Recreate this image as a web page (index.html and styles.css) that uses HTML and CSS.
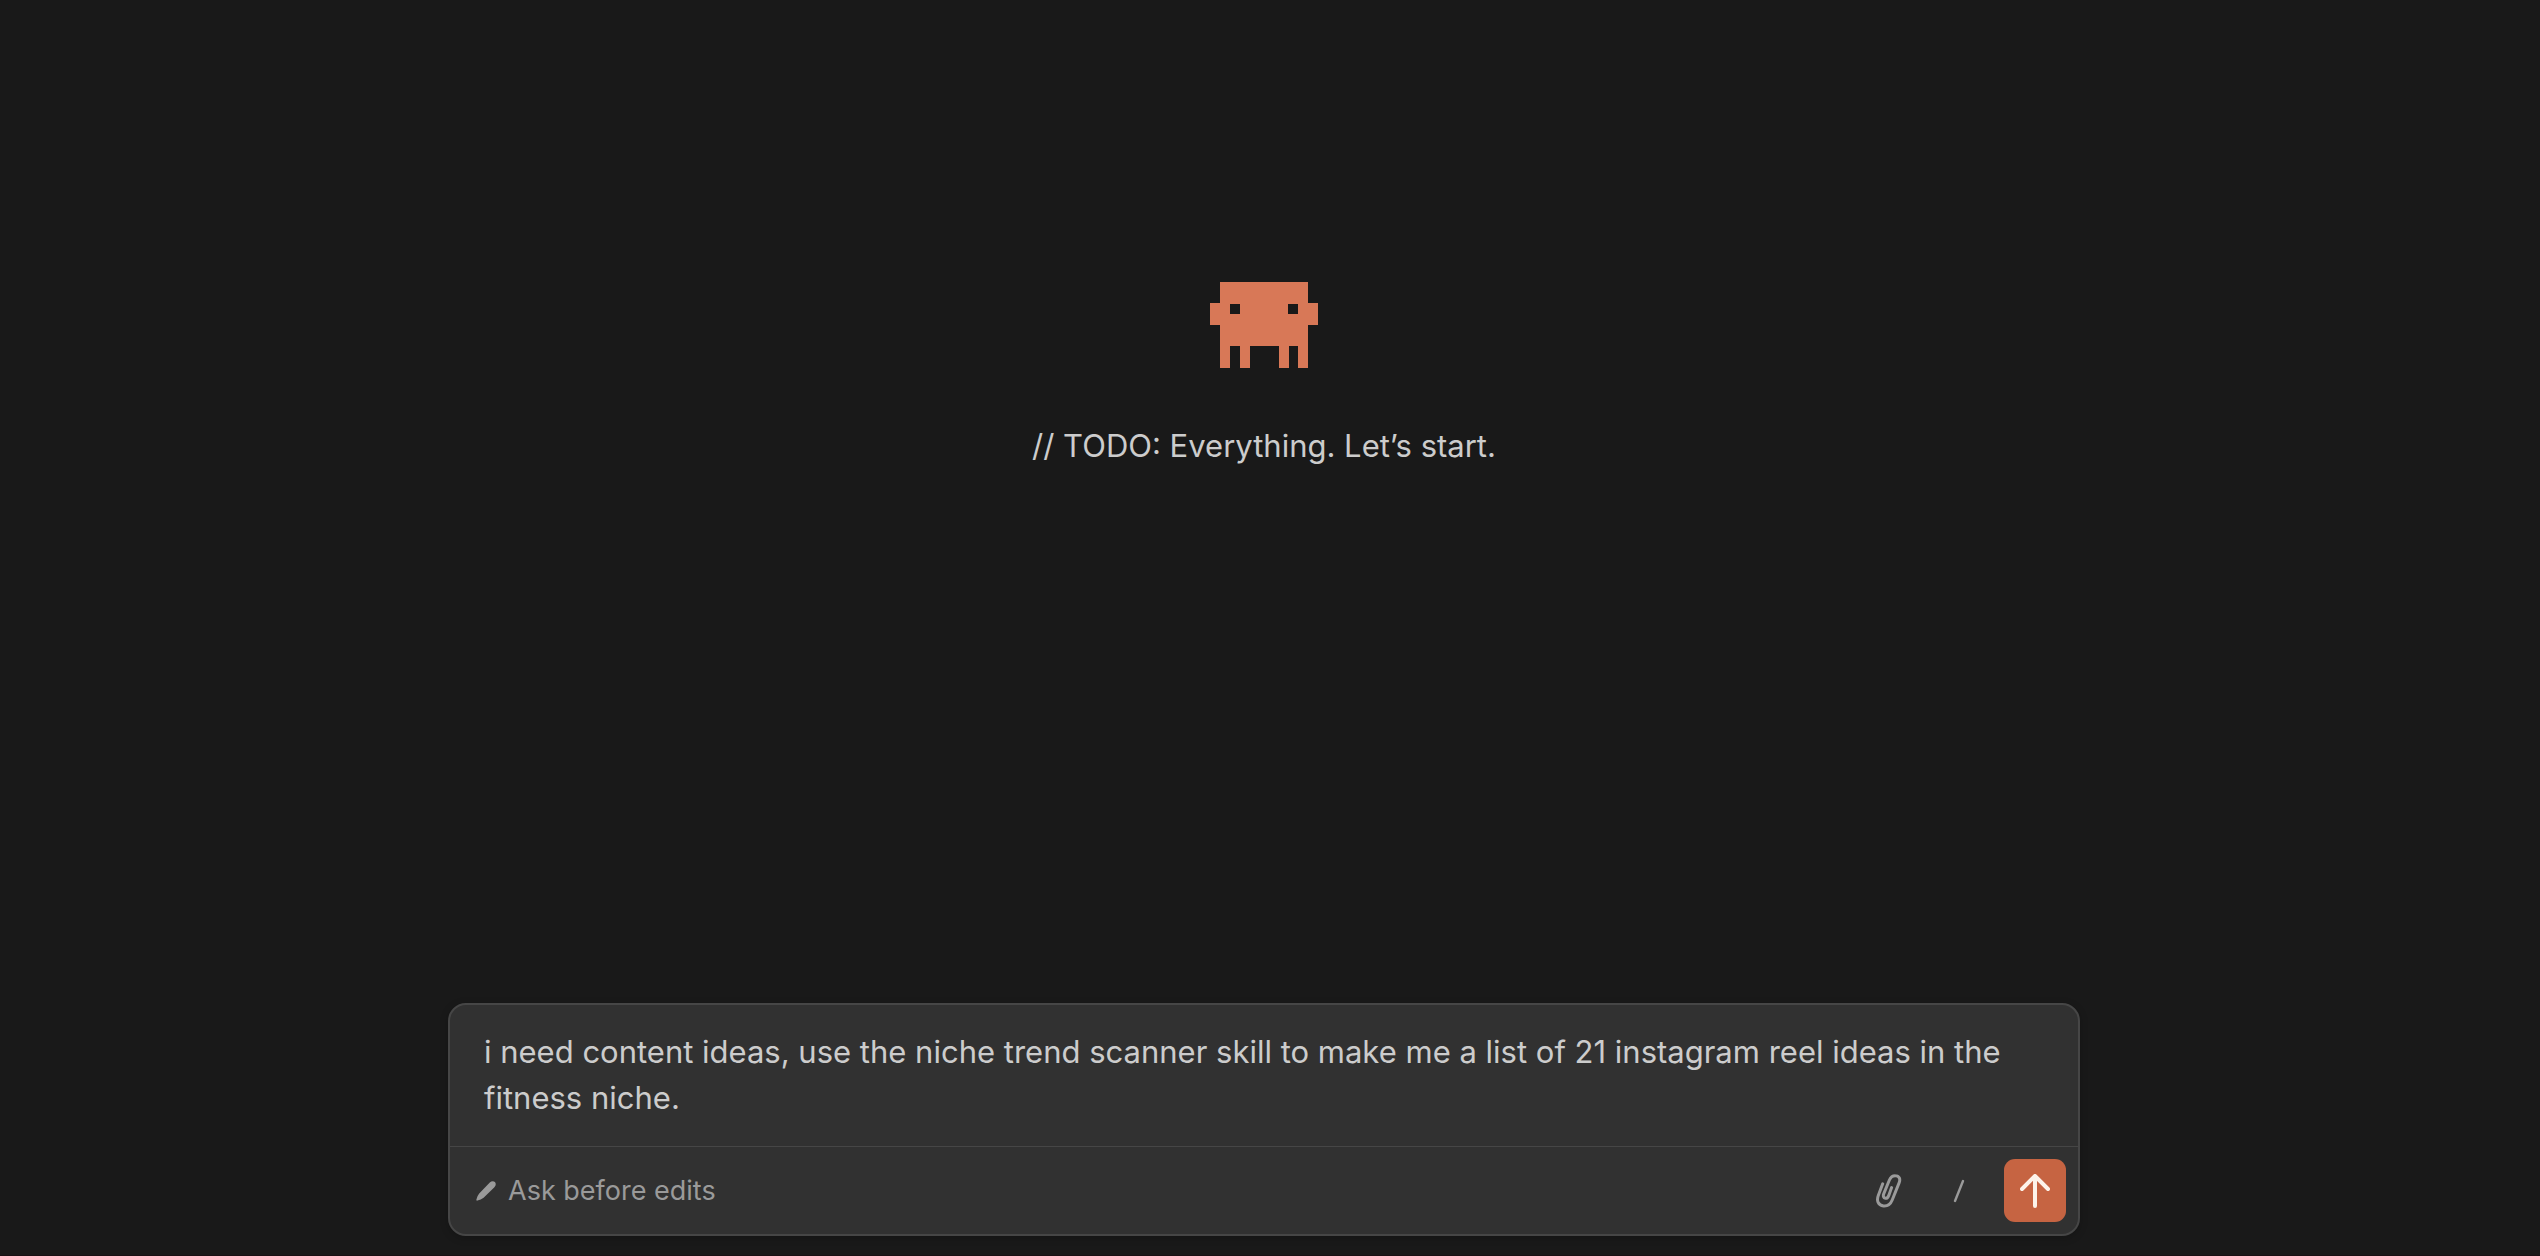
FILE: index.html
```html
<!DOCTYPE html>
<html lang="en">
<head>
<meta charset="utf-8">
<meta name="viewport" content="width=device-width, initial-scale=1">
<title>New session</title>
<link rel="stylesheet" href="styles.css">
</head>
<body>
<main class="chat">
  <section class="welcome">
    <svg class="mascot" viewBox="0 0 108 86" aria-hidden="true">
      <path fill="currentColor" fill-rule="evenodd" d="M10 0H98V21H108V43H98V86H88V64H79V86H69V64H40V86H30V64H20V86H10V43H0V21H10ZM20 22V32H30V22ZM78 22V32H88V22Z"/>
    </svg>
    <p class="tagline">// TODO: Everything. Let’s start.</p>
  </section>
  <form class="composer">
    <textarea class="prompt" rows="2" aria-label="Message">i need content ideas, use the niche trend scanner skill to make me a list of 21 instagram reel ideas in the fitness niche.</textarea>
    <div class="toolbar">
      <button class="mode" type="button">
        <svg class="pencil" viewBox="0 0 20 20" aria-hidden="true"><path fill="currentColor" d="M0.4 18.6Q1 15 3.2 12.4L13.8 1.6C15.4 0 17.6 -0.2 18.9 1.1C20.2 2.4 20 4.6 18.4 6.2L7.6 16.8Q5 19 1.4 19.6Q0.2 19.8 0.4 18.6Z"/></svg>
        <span>Ask before edits</span>
      </button>
      <div class="actions">
        <button class="tool" type="button" aria-label="Attach file">
          <svg class="clip" viewBox="0 0 26 34" aria-hidden="true"><path fill="none" stroke="currentColor" stroke-width="3" stroke-linecap="round" stroke-linejoin="round" d="M6.7 9.8L2.3 21.5C0.4 26.5 2 31.3 7.5 32C12 32.4 14.6 30 16.2 26L23.2 8.6C24.6 5 23.2 1.7 19.4 1.7C16.2 1.6 14.6 3.2 13.4 6L7.8 19.6C6.9 22 7.4 24 9.4 24.3C11.2 24.6 12 23.4 12.8 21.4L15.6 13.6"/></svg>
        </button>
        <button class="tool" type="button" aria-label="Commands">
          <svg class="slash" viewBox="0 0 12 24" aria-hidden="true"><path fill="none" stroke="currentColor" stroke-width="2.4" stroke-linecap="round" d="M10 2L2 22"/></svg>
        </button>
        <button class="send" type="submit" aria-label="Send">
          <svg class="arrow" viewBox="0 0 30 34" aria-hidden="true"><path fill="none" stroke="currentColor" stroke-width="4" stroke-linecap="round" stroke-linejoin="round" d="M15 32V2M2 15L15 2L28 15"/></svg>
        </button>
      </div>
    </div>
  </form>
</main>
</body>
</html>
```
FILE: styles.css
```css
* { box-sizing: border-box; }

body {
  margin: 0;
  background: #191919;
  color: #cccccc;
  font-family: Inter, "Liberation Sans", sans-serif;
}

.chat {
  display: flex;
  flex-direction: column;
  align-items: center;
  min-height: 100vh;
  border-bottom: 1px solid #1a1014;
  padding: 0 32px 19px 20px;
}

.welcome {
  flex: 1;
  display: flex;
  flex-direction: column;
  align-items: center;
  gap: 55px;
  padding-top: 282px;
}

.mascot {
  width: 108px;
  height: 86px;
  color: #d87857;
}

.tagline {
  margin: 0;
  font-size: 31px;
  line-height: 46px;
}

.composer {
  width: 100%;
  max-width: 1632px;
  border: 2px solid #464646;
  border-radius: 18px;
  background: #313131;
  box-shadow: 0 2px 8px rgba(0, 0, 0, 0.2);
}

.prompt {
  display: block;
  width: 100%;
  border: 0;
  padding: 24px 34px 25px;
  background: transparent;
  color: inherit;
  font: inherit;
  font-size: 31px;
  line-height: 46px;
  resize: none;
  outline: none;
  overflow: hidden;
}

.toolbar {
  display: flex;
  align-items: center;
  justify-content: space-between;
  border-top: 1px solid #464646;
  padding: 12px;
}

button {
  display: flex;
  align-items: center;
  justify-content: center;
  border: 0;
  padding: 0;
  background: transparent;
  color: #9a9a9a;
  font: inherit;
  cursor: pointer;
}

.mode {
  gap: 12px;
  padding-left: 14px;
  font-size: 27px;
  line-height: 36px;
}

.pencil { width: 20px; height: 20px; }

.actions { display: flex; align-items: center; gap: 20px; }

.tool { width: 50px; height: 52px; }
.clip { width: 26px; height: 34px; }
.slash { width: 12px; height: 24px; }

.send {
  width: 62px;
  height: 63px;
  border-radius: 11px;
  background: #c66442;
  color: #fdf3ea;
}

.arrow { width: 30px; height: 34px; }
```
